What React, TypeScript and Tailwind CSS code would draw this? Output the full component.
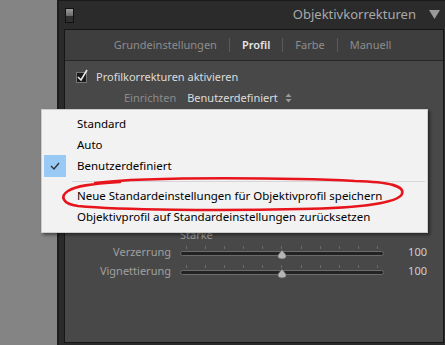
import { FC } from "react";

const font = { fontFamily: '"Segoe UI", "Noto Sans", "Open Sans", sans-serif' };

const Slider: FC<{ label: string; value: string }> = ({ label, value }) => {
  const ticks = [0, 1, 2, 3, 4, 5, 6, 7, 8, 9, 10];
  return (
    <div className="flex items-center h-[19px]">
      <div className="w-[115px] text-right text-[11px] text-[#a0a0a0] pr-[9px]">{label}</div>
      <div className="relative w-[204px] h-[19px]">
        <div className="absolute left-[6px] right-[6px] top-[3px] flex justify-between">
          {ticks.map((t) => (
            <span key={t} className="w-px h-[3px] bg-[#6a6a6a]" />
          ))}
        </div>
        <div className="absolute left-0 right-0 top-[8px] h-[5px] rounded-full bg-[#232323] border border-[#6b6b6b]" />
        <svg className="absolute left-[96px] top-[7px]" width="12" height="10" viewBox="0 0 12 10">
          <path d="M6 0 L10 5 Q11 9 6 9 Q1 9 2 5 Z" fill="#b5b5b5" stroke="#5a5a5a" strokeWidth="0.8" />
        </svg>
      </div>
      <div className="w-[43px] text-right text-[11px] text-[#cfcfcf]">{value}</div>
    </div>
  );
};

const Sep: FC = () => <span className="w-px h-[14px] bg-[#5a5a5a] mx-[12px]" />;

const App: FC = () => {
  return (
    <div className="relative w-[445px] h-[345px] flex bg-[#848484] overflow-hidden" style={font}>
      <div className="w-[57px]" />
      <div className="w-[2px] bg-[#1c1c1c]" />
      <div className="flex-1 flex flex-col bg-[#2b2b2b] border-t border-[#1a1a1a]">
        {/* header */}
        <div className="h-[28px] flex items-center pl-[6px] pr-[5px]">
          <div className="w-[9px] h-[15px] border border-[#111] flex flex-col">
            <div className="h-[7px] bg-gradient-to-b from-[#9a9a9a] to-[#6a6a6a]" />
            <div className="flex-1 bg-[#303030]" />
          </div>
          <div className="flex-1 text-right text-[13px] text-[#a9a9a9] pr-[13px]">Objektivkorrekturen</div>
          <svg width="11" height="10" viewBox="0 0 11 10">
            <path d="M0 0 H11 L5.5 9 Z" fill="#9a9a9a" />
          </svg>
        </div>
        {/* inner box */}
        <div className="flex-1 ml-[5px] mr-[1px] mb-[2px] border border-[#161616] flex flex-col bg-[#484848]">
          <div className="h-[31px] bg-[#3e3e3e] border-b border-[#262626] flex items-center justify-center text-[11px] text-[#8d8d8d] pr-[3px]">
            <span>Grundeinstellungen</span>
            <Sep />
            <span className="text-[#e6e6e6] font-semibold">Profil</span>
            <Sep />
            <span>Farbe</span>
            <Sep />
            <span>Manuell</span>
          </div>
          <div className="flex flex-col pt-[7px]">
            <div className="flex items-center h-[19px] pl-[11px]">
              <div className="w-[11px] h-[11px] bg-[#1a1a1a] border border-[#777] relative">
                <svg className="absolute -left-[1px] -top-[4px]" width="13" height="14" viewBox="0 0 13 14">
                  <path d="M2 8 L5 11 L11 1" fill="none" stroke="#e8e8e8" strokeWidth="1.6" />
                </svg>
              </div>
              <span className="ml-[9px] text-[11px] text-[#dcdcdc]">Profilkorrekturen aktivieren</span>
            </div>
            <div className="flex items-center h-[22px] pl-[59px] text-[11px]">
              <span className="text-[#8c8c8c]">Einrichten</span>
              <span className="ml-[11px] text-[#dcdcdc]">Benutzerdefiniert</span>
              <svg className="ml-[7px]" width="7" height="10" viewBox="0 0 7 10">
                <path d="M0.5 4 L3.5 0.5 L6.5 4 Z M0.5 6 L3.5 9.5 L6.5 6 Z" fill="#9a9a9a" />
              </svg>
            </div>
            <div className="h-[121px]" />
            <div className="pl-[115px] h-[13px] text-[11px] text-[#9a9a9a] leading-[10px]">Stärke</div>
            <Slider label="Verzerrung" value="100" />
            <Slider label="Vignettierung" value="100" />
          </div>
        </div>
      </div>

      {/* dropdown menu */}
      <div className="absolute left-[41px] top-[109px] w-[387px] h-[124px] bg-[#f2f2f2] border border-[#cccccc] shadow-[2px_2px_3px_rgba(0,0,0,0.45)] pt-[3px] text-[11.5px] text-black">
        <div className="h-[21px] flex items-center pl-[35px]">Standard</div>
        <div className="h-[21px] flex items-center pl-[35px]">Auto</div>
        <div className="h-[22px] flex items-center">
          <div className="ml-[2px] w-[22px] h-[22px] bg-[#99c9f5] flex items-center justify-center">
            <svg width="10" height="8" viewBox="0 0 10 8">
              <path d="M1 4 L4 7 L9 1" fill="none" stroke="#333" strokeWidth="1.4" />
            </svg>
          </div>
          <span className="ml-[11px]">Benutzerdefiniert</span>
        </div>
        <div className="h-[8px] flex items-center pl-[30px] pr-[2px]">
          <div className="flex-1 h-px bg-[#d7d7d7]" />
        </div>
        <div className="h-[21px] flex items-center pl-[35px]">Neue Standardeinstellungen für Objektivprofil speichern</div>
        <div className="h-[21px] flex items-center pl-[35px]">Objektivprofil auf Standardeinstellungen zurücksetzen</div>
      </div>

      {/* red hand-drawn ellipse */}
      <svg className="absolute left-0 top-0 pointer-events-none" width="445" height="345" viewBox="0 0 445 345">
        <path
          d="M95 183 C 150 176, 300 178, 355 181 C 390 182, 405 186, 402 194 C 398 203, 360 208, 300 209 C 220 211, 120 210, 78 206 C 62 204, 60 196, 68 191 C 76 186, 90 184, 120 182"
          fill="none"
          stroke="#e8141c"
          strokeWidth="2.6"
          strokeLinecap="round"
        />
      </svg>
    </div>
  );
};

export default App;
